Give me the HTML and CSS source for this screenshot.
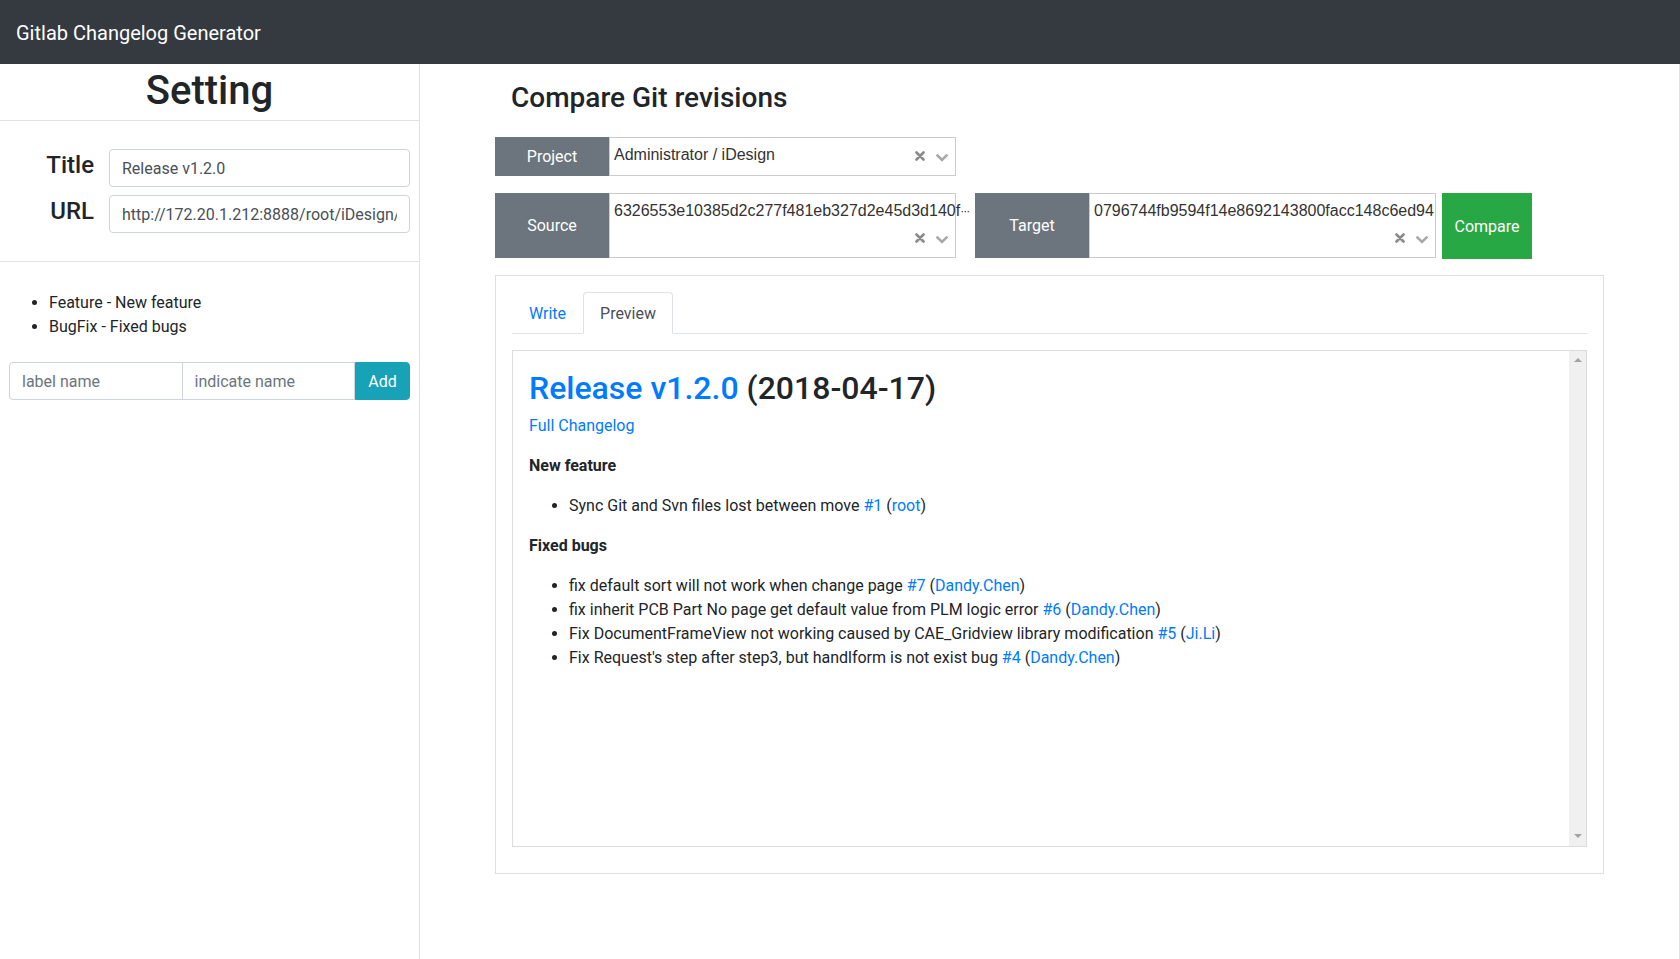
FILE: index.html
```html
<!DOCTYPE html>
<html lang="en">
<head>
<meta charset="utf-8">
<title>Gitlab Changelog Generator</title>
<link rel="stylesheet" href="styles.css">
</head>
<body>
<header class="navbar"><span class="brand">Gitlab Changelog Generator</span></header>
<div class="layout">
  <aside class="sidebar">
    <div class="sidebar-head"><h1>Setting</h1></div>
    <form class="settings">
      <div class="field"><label>Title</label><input class="form-control" value="Release v1.2.0"></div>
      <div class="field"><label>URL</label><input class="form-control" value="http://172.20.1.212:8888/root/iDesign/merge_requests"></div>
    </form>
    <div class="labels">
      <ul>
        <li>Feature - New feature</li>
        <li>BugFix - Fixed bugs</li>
      </ul>
      <div class="input-group">
        <input class="ig-input first" placeholder="label name">
        <input class="ig-input" placeholder="indicate name">
        <button class="btn-add" type="button">Add</button>
      </div>
    </div>
  </aside>
  <main class="main">
    <h3 class="page-title">Compare Git revisions</h3>
    <div class="row row-project">
      <div class="group">
        <div class="addon">Project</div>
        <div class="select">
          <div class="selected"><span class="tag">Administrator / iDesign</span></div>
          <div class="actions">
            <svg class="i-clear" width="10" height="10" viewBox="0 0 10 10"><path d="M1.5 1.5L8.5 8.5M8.5 1.5L1.5 8.5" stroke="#8a8a8a" stroke-width="2.6" stroke-linecap="round"/></svg>
            <svg class="i-caret" width="14" height="9" viewBox="0 0 14 9"><path d="M1.6 1.6L7 7L12.4 1.6" fill="none" stroke="#a8a8a8" stroke-width="2.6"/></svg>
          </div>
        </div>
      </div>
    </div>
    <div class="row row-rev">
      <div class="group group-source">
        <div class="addon">Source</div>
        <div class="select">
          <div class="selected"><span class="tag">6326553e10385d2c277f481eb327d2e45d3d140f<span class="ell">···</span></span></div>
          <div class="actions">
            <svg class="i-clear" width="10" height="10" viewBox="0 0 10 10"><path d="M1.5 1.5L8.5 8.5M8.5 1.5L1.5 8.5" stroke="#8a8a8a" stroke-width="2.6" stroke-linecap="round"/></svg>
            <svg class="i-caret" width="14" height="9" viewBox="0 0 14 9"><path d="M1.6 1.6L7 7L12.4 1.6" fill="none" stroke="#a8a8a8" stroke-width="2.6"/></svg>
          </div>
        </div>
      </div>
      <div class="group group-target">
        <div class="addon">Target</div>
        <div class="select">
          <div class="selected"><span class="tag">0796744fb9594f14e8692143800facc148c6ed94</span></div>
          <div class="actions">
            <svg class="i-clear" width="10" height="10" viewBox="0 0 10 10"><path d="M1.5 1.5L8.5 8.5M8.5 1.5L1.5 8.5" stroke="#8a8a8a" stroke-width="2.6" stroke-linecap="round"/></svg>
            <svg class="i-caret" width="14" height="9" viewBox="0 0 14 9"><path d="M1.6 1.6L7 7L12.4 1.6" fill="none" stroke="#a8a8a8" stroke-width="2.6"/></svg>
          </div>
        </div>
      </div>
      <button class="btn-compare" type="button">Compare</button>
    </div>
    <section class="card">
      <nav class="nav-tabs">
        <a class="tab">Write</a>
        <a class="tab active">Preview</a>
      </nav>
      <div class="preview">
        <div class="preview-body">
          <h2><a class="link">Release v1.2.0</a> (2018-04-17)</h2>
          <p><a class="link">Full Changelog</a></p>
          <p><strong>New feature</strong></p>
          <ul>
            <li>Sync Git and Svn files lost between move <a class="link">#1</a> (<a class="link">root</a>)</li>
          </ul>
          <p><strong>Fixed bugs</strong></p>
          <ul>
            <li>fix default sort will not work when change page <a class="link">#7</a> (<a class="link">Dandy.Chen</a>)</li>
            <li>fix inherit PCB Part No page get default value from PLM logic error <a class="link">#6</a> (<a class="link">Dandy.Chen</a>)</li>
            <li>Fix DocumentFrameView not working caused by CAE_Gridview library modification <a class="link">#5</a> (<a class="link">Ji.Li</a>)</li>
            <li>Fix Request's step after step3, but handlform is not exist bug <a class="link">#4</a> (<a class="link">Dandy.Chen</a>)</li>
          </ul>
        </div>
        <div class="scrollbar"><span class="arrow-up"></span><span class="arrow-down"></span></div>
      </div>
    </section>
  </main>
</div>
</body>
</html>
```
FILE: styles.css
```css
* { box-sizing: border-box; }

body {
  margin: 0;
  font-family: Roboto, "Liberation Sans", Arial, sans-serif;
  font-size: 16px;
  line-height: 1.5;
  color: #212529;
  background: #fff;
}

.navbar {
  height: 64px;
  background: #343a40;
  padding: 18px 16px 0;
}
.brand {
  color: #fff;
  font-size: 20px;
  line-height: 30px;
}

.layout {
  display: flex;
  min-height: 895px;
}

/* sidebar */
.sidebar {
  width: 420px;
  flex: none;
  border-right: 1px solid #dee2e6;
}
.sidebar-head {
  border-bottom: 1px solid #dee2e6;
  padding: 3px 0 5px;
  text-align: center;
}
.sidebar-head h1 {
  margin: 0;
  font-size: 40px;
  line-height: 48px;
  font-weight: 500;
}
.settings {
  border-bottom: 1px solid #dee2e6;
  padding: 28px 9px 28px;
  display: flex;
  flex-direction: column;
  gap: 8px;
  margin: 0;
}
.field {
  display: grid;
  grid-template-columns: 85px 1fr;
  column-gap: 15px;
  align-items: start;
}
.field label {
  text-align: right;
  font-size: 24px;
  line-height: 29px;
  font-weight: 500;
  padding-top: 2px;
}
.form-control {
  width: 100%;
  height: 38px;
  border: 1px solid #ced4da;
  border-radius: 4px;
  padding: 6px 12px;
  font-family: inherit;
  font-size: 16px;
  line-height: 24px;
  color: #495057;
  background: #fff;
}

.labels {
  padding: 29px 9px 0;
}
.labels ul {
  margin: 0 0 23px;
  padding-left: 40px;
}
.input-group {
  display: flex;
  height: 38px;
}
.ig-input {
  flex: 1;
  min-width: 0;
  border: 1px solid #ced4da;
  border-radius: 0;
  padding: 6px 12px;
  font-family: inherit;
  font-size: 16px;
  color: #495057;
}
.ig-input + .ig-input { margin-left: -1px; }
.ig-input.first { border-radius: 4px 0 0 4px; }
.ig-input::placeholder { color: #6c757d; }
.btn-add {
  flex: none;
  width: 55px;
  border: 1px solid #17a2b8;
  background: #17a2b8;
  color: #fff;
  font-family: inherit;
  font-size: 16px;
  border-radius: 0 4px 4px 0;
  padding: 0;
}

/* main */
.main {
  flex: 1;
  border-right: 1px solid #dee2e6;
  padding: 17px 75px 0;
}
.page-title {
  margin: 0 0 22px;
  padding-left: 16px;
  font-size: 28px;
  line-height: 34px;
  font-weight: 500;
}
.row {
  display: flex;
  align-items: flex-start;
}
.row-project {
  height: 39px;
  margin-bottom: 17px;
}
.row-rev {
  height: 66px;
  margin-bottom: 16px;
}
.group {
  display: flex;
  width: 461px;
  height: 100%;
}
.row-rev .group { height: 65px; }
.group-source { margin-right: 19px; }
.group-target { margin-right: 6px; }
.addon {
  width: 114px;
  flex: none;
  background: #6c757d;
  color: #fff;
  display: flex;
  align-items: center;
  justify-content: center;
}
.select {
  width: 347px;
  flex: none;
  border: 1px solid #cccccc;
  display: flex;
  background: #fff;
}
.selected {
  flex: 1;
  min-width: 0;
  padding: 5px 0 0 4px;
}
.tag {
  display: block;
  font-family: "Liberation Sans", Arial, sans-serif;
  font-size: 16px;
  line-height: 23px;
  color: #333;
  white-space: nowrap;
}
.ell {
  font-size: 12px;
  letter-spacing: -1px;
  line-height: 0;
  vertical-align: 1px;
}
.actions {
  align-self: flex-end;
  height: 38px;
  display: flex;
  align-items: center;
  gap: 10px;
  padding-right: 6px;
  flex: none;
}
.i-caret { margin-top: 2px; }
.btn-compare {
  width: 90px;
  height: 66px;
  flex: none;
  border: 0;
  background: #28a745;
  color: #fff;
  font-family: inherit;
  font-size: 16px;
  padding: 0;
}

/* card */
.card {
  border: 1px solid #dfdfdf;
  padding: 16px 16px 26px;
}
.nav-tabs {
  display: flex;
  border-bottom: 1px solid #dee2e6;
}
.tab {
  display: block;
  padding: 9px 16px 7px;
  border: 1px solid transparent;
  border-radius: 4px 4px 0 0;
  margin-bottom: -1px;
  color: #007bff;
  line-height: 24px;
}
.tab.active {
  color: #495057;
  background: #fff;
  border-color: #dee2e6 #dee2e6 #fff;
}
.preview {
  height: 497px;
  margin-top: 16px;
  border: 1px solid #dcdcdc;
  display: flex;
}
.preview-body {
  flex: 1;
  min-width: 0;
  padding: 18px 16px;
  overflow: hidden;
}
.preview-body h2 {
  margin: 0 0 7px;
  font-size: 32px;
  line-height: 38px;
  font-weight: 500;
}
.preview-body p { margin: 0 0 16px; }
.preview-body p.fc { margin-bottom: 15px; }
.preview-body ul { margin: 0 0 16px; padding-left: 40px; }
.preview-body strong { font-weight: 700; }
.link { color: #007bff; }

.scrollbar {
  width: 17px;
  flex: none;
  background: #f0f0f0;
  display: flex;
  flex-direction: column;
  justify-content: space-between;
  align-items: center;
  padding: 7px 0 8px;
}
.arrow-up {
  width: 0; height: 0;
  border-left: 4px solid transparent;
  border-right: 4px solid transparent;
  border-bottom: 4px solid #a3a3a3;
}
.arrow-down {
  width: 0; height: 0;
  border-left: 4px solid transparent;
  border-right: 4px solid transparent;
  border-top: 4px solid #a3a3a3;
}
```
